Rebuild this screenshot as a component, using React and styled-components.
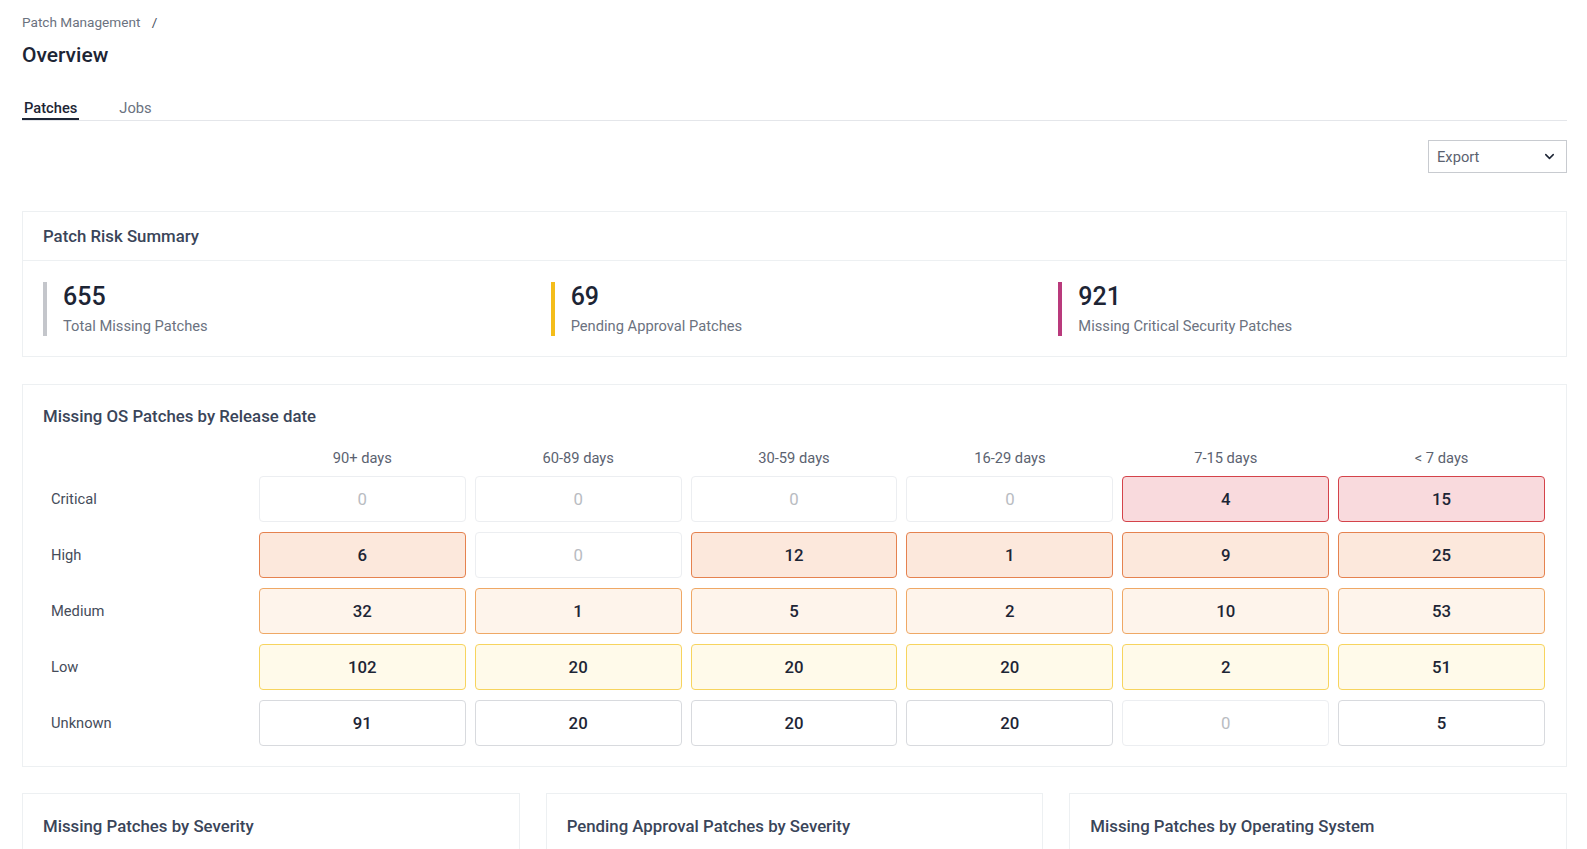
import React, { useState } from "react";
import styled, { createGlobalStyle } from "styled-components";
import { ChevronDown } from "lucide-react";

const GlobalStyle = createGlobalStyle`
  * { box-sizing: border-box; }
  body {
    margin: 0;
    background: #ffffff;
    font-family: Roboto, "Liberation Sans", Arial, sans-serif;
    color: #1f2737;
  }
`;

const AGES = ["90+ days", "60-89 days", "30-59 days", "16-29 days", "7-15 days", "< 7 days"];

const MATRIX = [
  { label: "Critical", level: "critical", values: [0, 0, 0, 0, 4, 15] },
  { label: "High", level: "high", values: [6, 0, 12, 1, 9, 25] },
  { label: "Medium", level: "medium", values: [32, 1, 5, 2, 10, 53] },
  { label: "Low", level: "low", values: [102, 20, 20, 20, 2, 51] },
  { label: "Unknown", level: "unknown", values: [91, 20, 20, 20, 0, 5] },
];

const STATS = [
  { value: 655, label: "Total Missing Patches", color: "#c4c6cb" },
  { value: 69, label: "Pending Approval Patches", color: "#f4bd1a" },
  { value: 921, label: "Missing Critical Security Patches", color: "#b93a7c" },
];

const CELL_COLORS = {
  critical: { bg: "#f9dadd", border: "#d4434a" },
  high: { bg: "#fce8dc", border: "#e5824f" },
  medium: { bg: "#fef4eb", border: "#efa865" },
  low: { bg: "#fffaea", border: "#f7d45e" },
  unknown: { bg: "#ffffff", border: "#d8dade" },
  empty: { bg: "#ffffff", border: "#eceef1" },
};

export default function App() {
  const [tab, setTab] = useState("patches");

  return (
    <Page>
      <GlobalStyle />
      <Breadcrumb>
        Patch Management <Slash>/</Slash>
      </Breadcrumb>
      <Title>Overview</Title>

      <Tabs>
        <Tab $active={tab === "patches"} onClick={() => setTab("patches")}>
          Patches
        </Tab>
        <Tab $active={tab === "jobs"} onClick={() => setTab("jobs")}>
          Jobs
        </Tab>
      </Tabs>

      <Toolbar>
        <ExportSelect>
          Export
          <ChevronDown size={15} strokeWidth={2.4} />
        </ExportSelect>
      </Toolbar>

      <Card>
        <CardHeader>Patch Risk Summary</CardHeader>
        <StatsRow>
          {STATS.map((s) => (
            <Stat key={s.label} $color={s.color}>
              <StatValue>{s.value}</StatValue>
              <StatLabel>{s.label}</StatLabel>
            </Stat>
          ))}
        </StatsRow>
      </Card>

      <MatrixCard>
        <SectionTitle>Missing OS Patches by Release date</SectionTitle>
        <Matrix>
          <span />
          {AGES.map((a) => (
            <ColumnHead key={a}>{a}</ColumnHead>
          ))}
          {MATRIX.map((row) => (
            <React.Fragment key={row.label}>
              <RowLabel>{row.label}</RowLabel>
              {row.values.map((v, i) => (
                <Cell key={i} $level={v === 0 ? "empty" : row.level} $empty={v === 0}>
                  {v}
                </Cell>
              ))}
            </React.Fragment>
          ))}
        </Matrix>
      </MatrixCard>

      <ChartRow>
        <ChartCard>
          <SectionTitle>Missing Patches by Severity</SectionTitle>
        </ChartCard>
        <ChartCard>
          <SectionTitle>Pending Approval Patches by Severity</SectionTitle>
        </ChartCard>
        <ChartCard>
          <SectionTitle>Missing Patches by Operating System</SectionTitle>
        </ChartCard>
      </ChartRow>
    </Page>
  );
}

const Page = styled.div`
  padding: 12px 20px 0 22px;
`;

const Breadcrumb = styled.div`
  font-size: 13.6px;
  line-height: 20px;
  color: #6b7280;
`;

const Slash = styled.span`
  margin-left: 8px;
  color: #4b5260;
`;

const Title = styled.h1`
  margin: 9px 0 0;
  font-size: 21px;
  line-height: 28px;
  font-weight: 500;
  color: #1d2535;
`;

const Tabs = styled.div`
  display: flex;
  gap: 38px;
  margin-top: 28px;
  border-bottom: 1px solid #e4e6ea;
`;

const Tab = styled.div`
  padding: 1px 2px 0;
  font-size: 14.7px;
  line-height: 20px;
  cursor: pointer;
  font-weight: ${(p) => (p.$active ? 500 : 400)};
  color: ${(p) => (p.$active ? "#1d2535" : "#6b7280")};
  border-bottom: 2px solid ${(p) => (p.$active ? "#1d2535" : "transparent")};
`;

const Toolbar = styled.div`
  display: flex;
  justify-content: flex-end;
  margin-top: 19px;
`;

const ExportSelect = styled.div`
  width: 139px;
  height: 33px;
  display: flex;
  align-items: center;
  justify-content: space-between;
  padding: 0 9px 0 8px;
  border: 1px solid #c8cbd0;
  font-size: 14.7px;
  color: #5b6270;
  background: #fff;
  svg {
    color: #1d2535;
  }
`;

const Card = styled.section`
  margin-top: 38px;
  border: 1px solid #edf0f2;
  background: #fff;
`;

const CardHeader = styled.div`
  height: 49px;
  display: flex;
  align-items: center;
  padding: 0 20px;
  border-bottom: 1px solid #edf0f2;
  font-size: 16.8px;
  font-weight: 500;
  color: #3a4559;
`;

const StatsRow = styled.div`
  display: grid;
  grid-template-columns: repeat(3, 1fr);
  padding: 21px 0 20px 20px;
`;

const Stat = styled.div`
  border-left: 4px solid ${(p) => p.$color};
  padding-left: 16px;
`;

const StatValue = styled.div`
  font-size: 25px;
  line-height: 30px;
  font-weight: 500;
  color: #1d2535;
`;

const StatLabel = styled.div`
  margin-top: 4px;
  font-size: 14.7px;
  line-height: 20px;
  color: #6b7280;
`;

const MatrixCard = styled.section`
  margin-top: 27px;
  border: 1px solid #edf0f2;
  padding: 20px 21px 20px 20px;
`;

const SectionTitle = styled.h2`
  margin: 0;
  font-size: 16.8px;
  line-height: 22px;
  font-weight: 500;
  color: #3a4559;
`;

const Matrix = styled.div`
  display: grid;
  grid-template-columns: repeat(7, 1fr);
  column-gap: 9px;
  row-gap: 10px;
  margin-top: 21px;
`;

const ColumnHead = styled.div`
  text-align: center;
  font-size: 14.7px;
  line-height: 20px;
  color: #5b6270;
  margin-bottom: -2px;
`;

const RowLabel = styled.div`
  display: flex;
  align-items: center;
  padding-left: 8px;
  font-size: 14.7px;
  color: #454c5a;
`;

const Cell = styled.div`
  height: 46px;
  display: flex;
  align-items: center;
  justify-content: center;
  border-radius: 4px;
  font-size: 16.8px;
  font-weight: ${(p) => (p.$empty ? 400 : 500)};
  color: ${(p) => (p.$empty ? "#b9bcc2" : "#1d2535")};
  background: ${(p) => CELL_COLORS[p.$level].bg};
  border: 1px solid ${(p) => CELL_COLORS[p.$level].border};
`;

const ChartRow = styled.div`
  display: grid;
  grid-template-columns: repeat(3, 1fr);
  gap: 26px;
  margin-top: 26px;
`;

const ChartCard = styled.section`
  height: 260px;
  border: 1px solid #edf0f2;
  padding: 21px 20px;
`;
